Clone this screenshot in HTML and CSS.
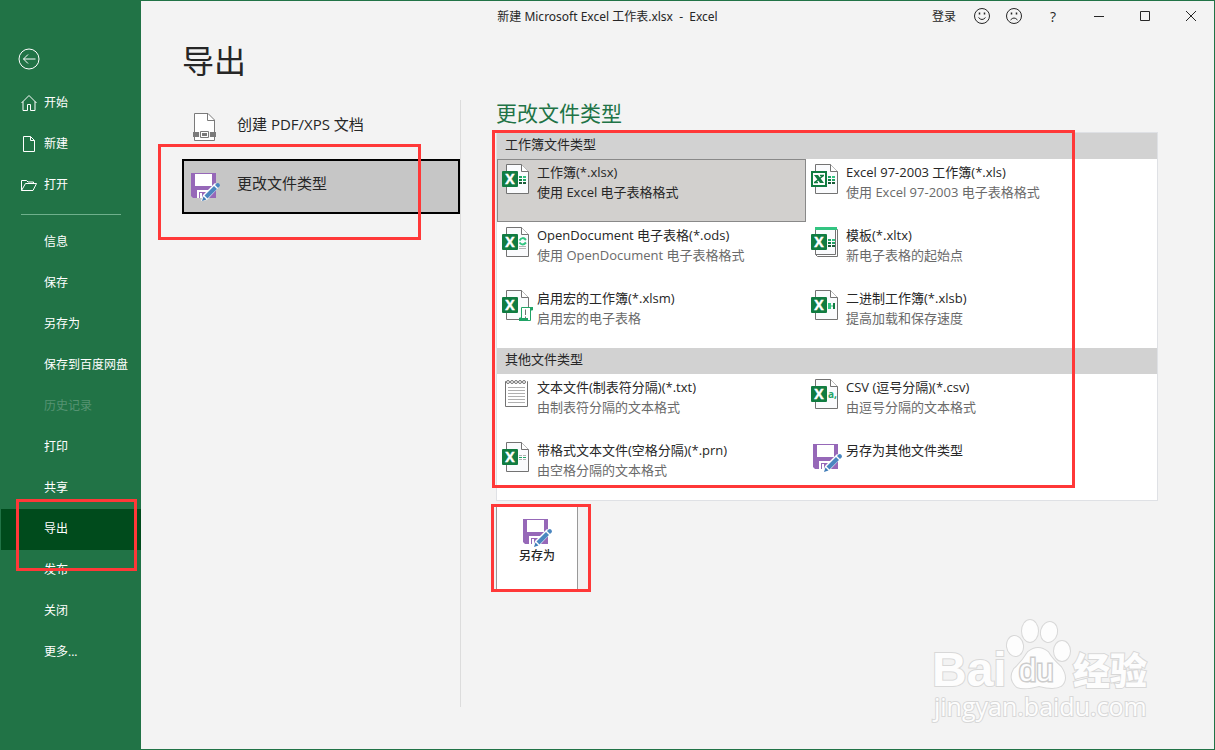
FILE: index.html
```html
<!DOCTYPE html>
<html lang="zh-CN">
<head>
    <meta charset="UTF-8">
    <meta name="viewport" content="width=device-width, initial-scale=1.0">
    <title>新建 Microsoft Excel 工作表.xlsx - Excel</title>
    <link rel="stylesheet" href="styles.css">
</head>
<body>
    <!-- Shared icons -->
    <svg class="sprite" aria-hidden="true">
        <symbol id="page" viewBox="0 0 32 32">
            <path d="M4.500 .5H19.500L26.500 7.500V29.500H4.500Z" fill="#fafbfd" stroke="#737373"/>
            <path d="M19.500 .5V7.500H26.500" fill="#fff" stroke="#737373"/>
        </symbol>
        <symbol id="badge" viewBox="0 0 32 32">
            <rect x="0" y="7" width="16" height="16" rx="1" fill="#107c41"/>
            <text x="8" y="20" class="badge-letter">X</text>
        </symbol>
        <symbol id="cells" viewBox="0 0 32 32">
            <path d="M17 12h3v2h-3z" fill="#21a366"/><path d="M21 12h3v2h-3z" fill="#33c481"/>
            <path d="M17 15h3v2h-3z" fill="#107c41"/><path d="M21 15h3v2h-3z" fill="#21a366"/>
            <path d="M17 18h3v2h-3zM21 18h3v2h-3z" fill="#185c37"/>
        </symbol>
        <symbol id="save" viewBox="0 0 32 32">
            <path d="M2 2H27V27H4L2 25Z" fill="#9668b8"/>
            <path d="M6 3H23V15H6ZM8 19H20V27H8Z" fill="#fff"/>
            <path d="M9 20H19V27H9Z" fill="#9668b8"/>
            <path d="M8 19H20V21H10V27H8ZM11 22H13V27H11Z" fill="#fff"/>
            <path d="M12 30L14 24L26 12L31 15L18 29Z" fill="#fff"/>
            <path d="M13 30L14.500 25.500L17.500 28.500Z" fill="#3f7cb8"/>
            <path d="M15.500 24.500L25 15L28 18L18.500 27.500Z" fill="#4a86c0"/>
            <path d="M26 14L27.500 12.500Q29 11.500 30.500 13Q31.500 14.500 30.500 15.500L29 17Z" fill="#4a86c0"/>
        </symbol>
    </svg>

    <header class="titlebar">
        <div class="doc-title">新建 Microsoft Excel 工作表.xlsx &nbsp;-&nbsp; Excel</div>
        <div class="window-tools">
            <button class="login">登录</button>
            <button class="face" aria-label="微笑">
                <svg width="18" height="18" viewBox="0 0 18 18"><circle cx="9" cy="9" r="7.500"/><path d="M6.500 5.500v2M11.500 5.500v2" stroke-width="1.500"/><path d="M5.500 10.500Q9 14.500 12.500 10.500"/></svg>
            </button>
            <button class="face" aria-label="哭脸">
                <svg width="18" height="18" viewBox="0 0 18 18"><circle cx="9" cy="9" r="7.500"/><path d="M6.500 5.500v2M11.500 5.500v2" stroke-width="1.500"/><path d="M5.500 13Q9 9 12.500 13"/></svg>
            </button>
            <button class="tool help" aria-label="帮助">?</button>
            <button class="tool" aria-label="最小化">
                <svg width="12" height="12" viewBox="0 0 12 12"><path d="M1 6.500H11"/></svg>
            </button>
            <button class="tool" aria-label="最大化">
                <svg width="12" height="12" viewBox="0 0 12 12"><path d="M1.500 1.500H10.500V10.500H1.500Z"/></svg>
            </button>
            <button class="tool" aria-label="关闭">
                <svg width="12" height="12" viewBox="0 0 12 12"><path d="M1 1L11 11M11 1L1 11"/></svg>
            </button>
        </div>
    </header>

    <!-- Backstage menu -->
    <nav class="sidebar">
        <button class="back" aria-label="返回">
            <svg width="22" height="22" viewBox="0 0 22 22"><circle cx="11" cy="11" r="10"/><path d="M17.500 11H5.500M10 6.500L5.500 11L10 15.500"/></svg>
        </button>
        <a class="nav-item with-icon" href="#">
            <svg width="16" height="16" viewBox="0 0 16 16"><path d="M.5 8L8 .5L15.500 8M2 6.500V15.500H6.500V9.500H9.500V15.500H14V6.500"/></svg>开始</a>
        <a class="nav-item with-icon" href="#">
            <svg width="16" height="16" viewBox="0 0 16 16"><path d="M2.500 .5H9.500L13.500 4.500V15.500H2.500ZM9.500 .5V4.500H13.500"/></svg>新建</a>
        <a class="nav-item with-icon" href="#">
            <svg width="16" height="16" viewBox="0 0 16 16"><path d="M.5 13.500V3.500H5.500L7 5H12.500V6.500M.5 13.500L4.500 6.500H15.500L12 13.500Z"/></svg>打开</a>
        <hr class="nav-line">
        <a class="nav-item" href="#">信息</a>
        <a class="nav-item" href="#">保存</a>
        <a class="nav-item" href="#">另存为</a>
        <a class="nav-item" href="#">保存到百度网盘</a>
        <a class="nav-item disabled" aria-disabled="true">历史记录</a>
        <a class="nav-item" href="#">打印</a>
        <a class="nav-item" href="#">共享</a>
        <a class="nav-item active" href="#">导出<span class="mark mark-nav"></span></a>
        <a class="nav-item" href="#">发布</a>
        <a class="nav-item" href="#">关闭</a>
        <a class="nav-item" href="#">更多...</a>
    </nav>

    <main class="page">
        <h1>导出</h1>
        <div class="columns">
            <div class="export-list">
                <button class="export-option">
                    <svg width="32" height="32" viewBox="0 0 32 32">
                        <path d="M5.500 20V1.500H19L25.500 8V20M5.500 25V28.500H25.500V25" fill="#fff" stroke="#7a7a7a"/>
                        <path d="M18.500 1.500V8.500H25.500" fill="none" stroke="#7a7a7a"/>
                        <path d="M4 20H10V25H4ZM21 20H27V25H21Z" fill="#7a7a7a"/>
                        <path d="M11.500 19.500H19.500V25.500H11.500Z" fill="#fff" stroke="#7a7a7a"/>
                        <path d="M13 21H18V24H13Z" fill="#7a7a7a"/>
                    </svg>
                    <span>创建 PDF/XPS 文档</span>
                </button>
                <button class="export-option selected">
                    <svg width="32" height="32"><use href="#save"/></svg>
                    <span>更改文件类型</span>
                    <span class="mark mark-option"></span>
                </button>
            </div>

            <section class="types">
                <h2>更改文件类型</h2>
                <div class="panel">
                    <h3>工作簿文件类型</h3>
                    <div class="tiles">
                        <button class="tile selected">
                            <svg width="32" height="32"><use href="#page"/><use href="#badge"/><use href="#cells"/></svg>
                            <span class="tile-text">工作簿(*.xlsx)<small>使用 Excel 电子表格格式</small></span>
                        </button>
                        <button class="tile">
                            <svg width="32" height="32">
                                <use href="#page"/><use href="#cells"/>
                                <rect x="1" y="8" width="14" height="14" fill="#fff" stroke="#107c41" stroke-width="2"/>
                                <path d="M3 11H7L13 19H9Z" fill="#107c41"/>
                                <path d="M12.500 11.500L3.500 18.500M9 11.500H13M3 18.500H7" stroke="#107c41" stroke-width="1.500"/>
                            </svg>
                            <span class="tile-text">Excel 97-2003 工作簿(*.xls)<small>使用 Excel 97-2003 电子表格格式</small></span>
                        </button>
                        <button class="tile">
                            <svg width="32" height="32">
                                <use href="#page"/><use href="#badge"/>
                                <path d="M17.500 13.500Q20.500 9 24 13M24 15.500Q20.500 19.500 17.500 15.500" fill="none" stroke="#33c481" stroke-width="2"/>
                                <path d="M17 19.500H24M17 21.500H24" stroke="#b5b5b5"/>
                            </svg>
                            <span class="tile-text">OpenDocument 电子表格(*.ods)<small>使用 OpenDocument 电子表格格式</small></span>
                        </button>
                        <button class="tile">
                            <svg width="32" height="32">
                                <path d="M6.500 2.500H26.500V29.500H6.500L4.500 27.500V2.500Z" fill="#fff" stroke="#737373"/>
                                <path d="M4.500 1V27.500H24.500V1" fill="#fafbfd" stroke="#737373"/>
                                <path d="M4 0H26V3H4Z" fill="#33c481"/>
                                <use href="#badge"/><use href="#cells"/>
                            </svg>
                            <span class="tile-text">模板(*.xltx)<small>新电子表格的起始点</small></span>
                        </button>
                        <button class="tile">
                            <svg width="32" height="32">
                                <use href="#page"/><use href="#badge"/>
                                <path d="M19.500 17.500H30.500V20H28.500V30.500H17.500V28H19.500Z" fill="#fff" stroke="#21a366"/>
                                <path d="M17 28H26V31H17ZM28 17H31V20H28Z" fill="#21a366"/>
                                <path d="M23.500 19.500V25M23.500 26.500V28" stroke="#737373"/>
                            </svg>
                            <span class="tile-text">启用宏的工作簿(*.xlsm)<small>启用宏的电子表格</small></span>
                        </button>
                        <button class="tile">
                            <svg width="32" height="32">
                                <use href="#page"/><use href="#badge"/>
                                <path d="M17 13H20V19H17Z" fill="#33c481"/><path d="M20 15H22V17H20Z" fill="#9ad9b9"/>
                                <path d="M22 13H24V19H22Z" fill="#107c41"/>
                            </svg>
                            <span class="tile-text">二进制工作簿(*.xlsb)<small>提高加载和保存速度</small></span>
                        </button>
                    </div>
                    <h3>其他文件类型</h3>
                    <div class="tiles">
                        <button class="tile">
                            <svg width="32" height="32">
                                <path d="M3.500 2.500H25.500V27.500H3.500Z" fill="#fff" stroke="#737373"/>
                                <path d="M6 8.500H23M6 11.500H23M6 14.500H23M6 17.500H23M6 20.500H23M6 23.500H23" stroke="#b0b0b0"/>
                                <path d="M4 3.500H25" stroke="#fff" stroke-width="3"/>
                                <g fill="none" stroke="#737373"><circle cx="6" cy="3" r="1.500"/><circle cx="10" cy="3" r="1.500"/><circle cx="14" cy="3" r="1.500"/><circle cx="18" cy="3" r="1.500"/><circle cx="22" cy="3" r="1.500"/></g>
                            </svg>
                            <span class="tile-text">文本文件(制表符分隔)(*.txt)<small>由制表符分隔的文本格式</small></span>
                        </button>
                        <button class="tile">
                            <svg width="32" height="32">
                                <use href="#page"/><use href="#badge"/>
                                <text x="17" y="19" class="csv-letter">a,</text>
                            </svg>
                            <span class="tile-text">CSV (逗号分隔)(*.csv)<small>由逗号分隔的文本格式</small></span>
                        </button>
                        <button class="tile">
                            <svg width="32" height="32">
                                <use href="#page"/><use href="#badge"/>
                                <path d="M17 13.500H20M21 13.500H24M17 17.500H20M21 17.500H24" stroke="#b0b0b0"/>
                                <path d="M17 15.500H20M21 15.500H24" stroke="#21a366"/>
                            </svg>
                            <span class="tile-text">带格式文本文件(空格分隔)(*.prn)<small>由空格分隔的文本格式</small></span>
                        </button>
                        <button class="tile">
                            <svg width="32" height="32"><use href="#save"/></svg>
                            <span class="tile-text">另存为其他文件类型</span>
                        </button>
                    </div>
                    <span class="mark mark-panel"></span>
                </div>
                <button class="save-as">
                    <svg width="32" height="32"><use href="#save"/></svg>
                    另存为
                    <span class="mark mark-save"></span>
                </button>
            </section>
        </div>
    </main>

    <svg class="watermark" width="230" height="110" viewBox="0 0 230 110" aria-hidden="true">
        <g class="wm-shape">
            <text x="2" y="67" class="wm-bai">Bai</text>
            <text x="143" y="66" class="wm-cn">经验</text>
            <ellipse cx="85" cy="27" rx="8" ry="10" transform="rotate(-8 85 27)"/>
            <ellipse cx="100" cy="12" rx="8" ry="11"/>
            <ellipse cx="119" cy="13" rx="8" ry="10" transform="rotate(14 119 13)"/>
            <ellipse cx="132" cy="32" rx="8" ry="10"/>
            <path d="M98 33Q108 25 118 33Q122 40 131 48Q139 60 131 67Q124 71 109 67Q94 71 87 68Q78 60 84 50Q92 43 98 33Z"/>
            <text x="89" y="62" class="wm-du">du</text>
            <text x="4" y="97" class="wm-url">jingyan.baidu.com</text>
        </g>
    </svg>
</body>
</html>
```
FILE: styles.css
```css
* {
    box-sizing: border-box;
}
body {
    margin: 0;
    min-height: 100vh;
    display: grid;
    grid-template-columns: 140px 1fr;
    grid-template-rows: 30px 1fr;
    position: relative;
    border: 1px solid #217346;
    background: #f3f3f3;
    color: #262626;
    font-family: "Open Sans", "Noto Sans CJK SC", sans-serif;
    font-size: 12px;
}
button {
    padding: 0;
    border: none;
    background: none;
    color: inherit;
    font: inherit;
}
h1, h2, h3 {
    margin: 0;
    font-weight: normal;
}
svg {
    flex-shrink: 0;
}
.sprite {
    display: none;
}

/* Title bar */
.titlebar {
    grid-column: 1 / 3;
    grid-row: 1;
    display: grid;
    grid-template-columns: 1fr auto 1fr;
    align-items: center;
    z-index: 1;
}
.doc-title {
    grid-column: 2;
    font-family: "Noto Sans", "Noto Sans CJK SC", sans-serif;
}
.window-tools {
    display: flex;
    justify-content: flex-end;
    align-items: center;
}
.window-tools button {
    display: flex;
    justify-content: center;
    align-items: center;
    height: 30px;
}
.window-tools svg {
    fill: none;
    stroke: #262626;
}
.window-tools .login {
    padding-right: 10px;
}
.face {
    width: 32px;
}
.tool {
    width: 46px;
}
.help {
    font-size: 14px;
}

/* Sidebar */
.sidebar {
    grid-column: 1;
    grid-row: 1 / 3;
    padding-top: 47px;
    background: #217346;
    color: #fff;
    z-index: 2;
}
.sidebar svg {
    fill: none;
    stroke: #fff;
}
.back {
    display: block;
    height: 22px;
    margin: 0 0 13px 17px;
}
.nav-item {
    display: flex;
    align-items: center;
    gap: 7px;
    height: 41px;
    padding: 0 0 4px 43px;
    color: #fff;
    text-decoration: none;
    white-space: nowrap;
}
.with-icon {
    padding-left: 20px;
}
.with-icon svg {
    margin-top: 2px;
}
.nav-line {
    height: 1px;
    margin: 8px 20px 7px;
    border: none;
    background: #6fb08c;
}
.disabled {
    color: #569373;
}
.active {
    position: relative;
    background: #004b1c;
}

/* Export page */
.page {
    grid-column: 2;
    grid-row: 2;
    display: flex;
    flex-direction: column;
    padding: 10px 56px 42px 41px;
}
h1 {
    margin-bottom: 19px;
    font-size: 32px;
    line-height: 40px;
}
.columns {
    flex: 1;
    display: flex;
}
.export-list {
    flex: 0 0 279px;
    display: flex;
    flex-direction: column;
    gap: 4px;
    border-right: 1px solid #dcdcdc;
}
.export-option {
    position: relative;
    display: flex;
    align-items: center;
    gap: 16px;
    height: 55px;
    padding: 0 5px;
    border: 2px solid transparent;
    font-size: 15px;
}
.export-option > span {
    padding-bottom: 8px;
}
.export-option.selected {
    border-color: #000;
    background: #c6c6c6;
}
.types {
    flex: 1;
    padding-left: 35px;
}
h2 {
    margin-bottom: 5px;
    color: #217346;
    font-size: 21px;
    line-height: 27px;
}
.panel {
    position: relative;
    border: 1px solid #dfe1e5;
    background: #fff;
}
h3 {
    padding: 0 8px 4px;
    background: #d2d2d2;
    font-size: 13px;
    line-height: 22px;
}
.tiles {
    display: grid;
    grid-template-columns: repeat(2, minmax(0, 309px));
    grid-auto-rows: 63px;
}
.tile {
    display: flex;
    align-items: flex-start;
    gap: 3px;
    padding: 2px 4px;
    border: 1px solid transparent;
    font-size: 13px;
    line-height: 20px;
    text-align: left;
    white-space: nowrap;
}
.tile svg {
    margin-top: 2px;
}
.tile small {
    display: block;
    color: #6a6a6a;
    font-size: 13px;
}
.tile.selected {
    border-color: #898989;
    background: #d2d0ce;
}
.tile.selected small {
    color: #262626;
}
.badge-letter {
    fill: #fff;
    stroke: #fff;
    stroke-width: 0.4px;
    font-size: 14px;
    font-weight: bold;
    text-anchor: middle;
}
.csv-letter {
    fill: #21a366;
    font-size: 10px;
    font-weight: bold;
}
.save-as {
    position: relative;
    display: flex;
    flex-direction: column;
    align-items: center;
    width: 82px;
    height: 86px;
    margin-top: 4px;
    padding-top: 11px;
    border: 1px solid #999;
    background: #fff;
    font-weight: 500;
    line-height: 14px;
}

/* Red highlight frames */
.mark {
    position: absolute;
    border: 3px solid #ff3838;
    pointer-events: none;
}
.mark-nav {
    inset: -10px 4px -21px 15px;
}
.mark-option {
    inset: -17px 37px -28px -26px;
}
.mark-panel {
    top: -3px;
    left: -5px;
    width: 583px;
    height: 358px;
}
.mark-save {
    inset: -2px -14px -2px -6px;
}

/* Watermark */
.watermark {
    position: absolute;
    right: 54px;
    bottom: 20px;
    overflow: visible;
}
.wm-shape {
    fill: #fdfdfd;
    stroke: #d8d8d8;
    stroke-width: 2px;
    paint-order: stroke;
}
.wm-bai {
    font: bold 48px "Liberation Sans", sans-serif;
}
.wm-cn {
    font: 900 37px "Noto Sans CJK SC", sans-serif;
}
.wm-du {
    font: 31px "Liberation Sans", sans-serif;
    stroke: #ccc;
    stroke-width: 3px;
}
.wm-url {
    font-size: 25px;
}
```
